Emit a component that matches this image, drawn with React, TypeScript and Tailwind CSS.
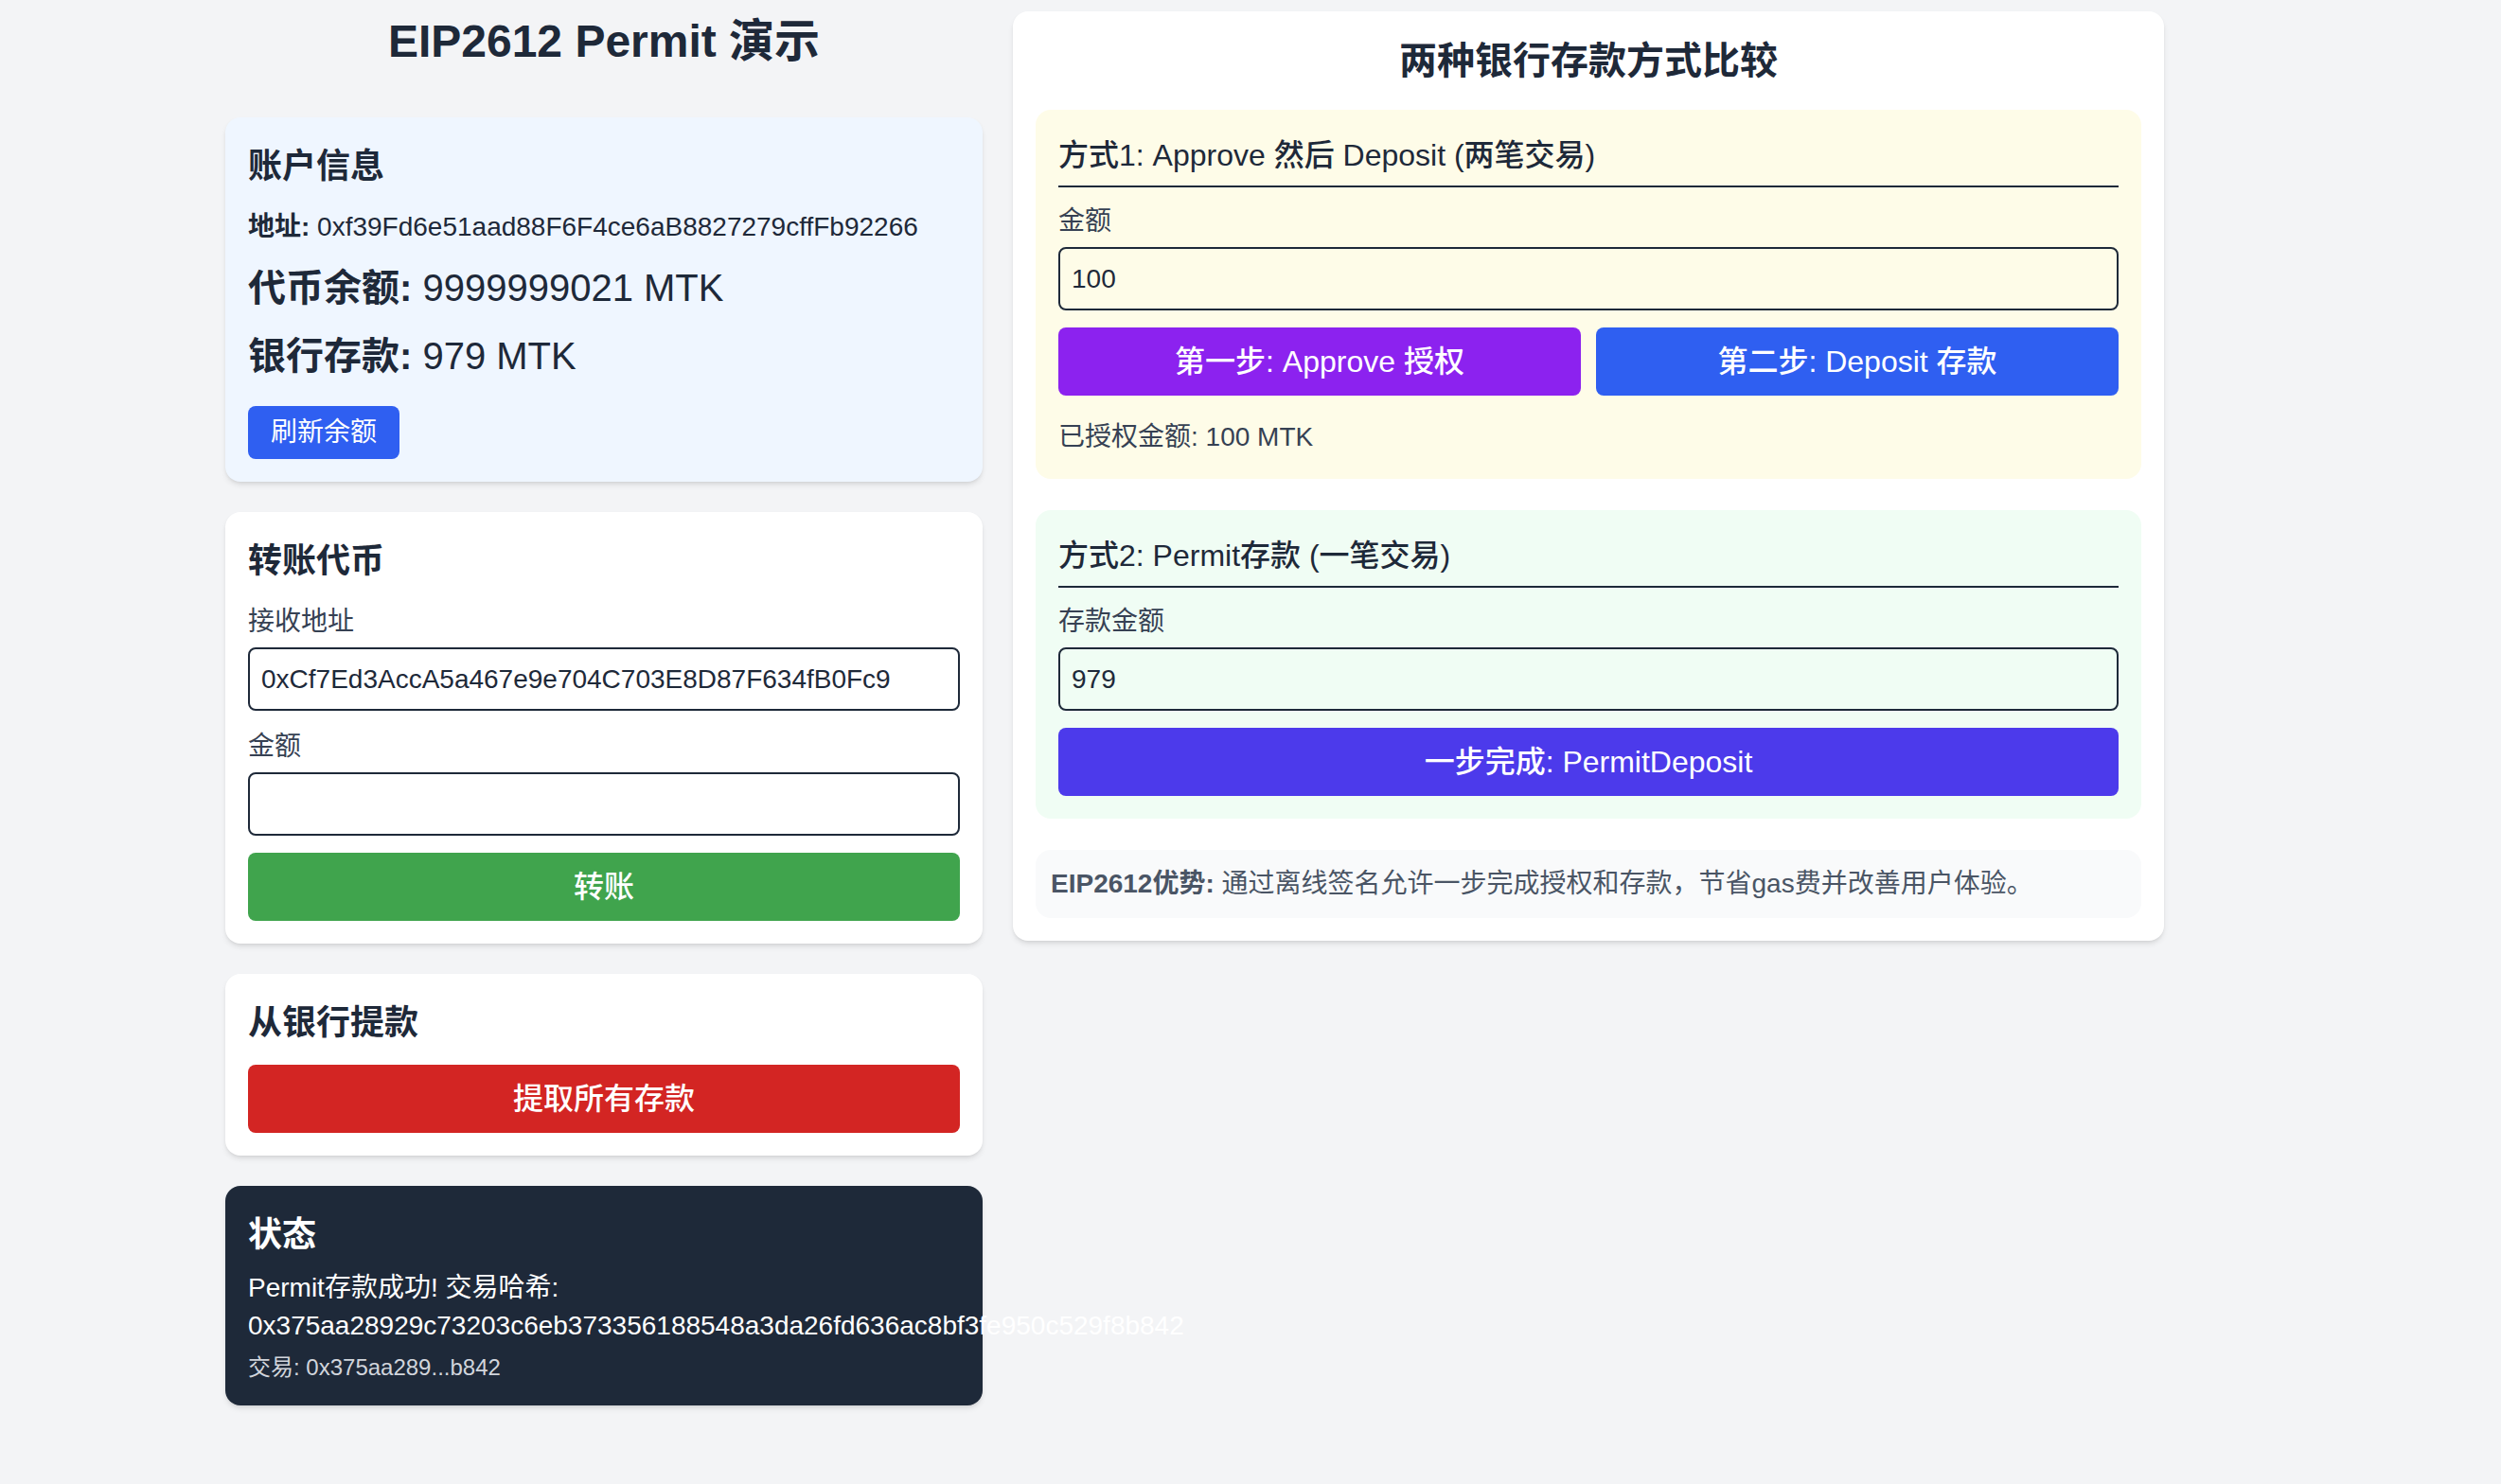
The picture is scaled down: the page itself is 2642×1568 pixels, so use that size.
import React from 'react';

const account = '0xf39Fd6e51aad88F6F4ce6aB8827279cffFb92266';
const recipient = '0xCf7Ed3AccA5a467e9e704C703E8D87F634fB0Fc9';
const txHash = '0x375aa28929c73203c6eb373356188548a3da26fd636ac8bf3fe950c529f8b842';

function Field({ label, value }: { label: string; value: string }) {
  return (
    <div className="mb-[18px]">
      <label className="block text-[28px] leading-[40px] text-gray-700 mb-[7px]">{label}</label>
      <input
        readOnly
        value={value}
        className="w-full h-[67px] px-3 text-[28px] leading-[40px] text-gray-800 bg-transparent border-2 border-gray-800 rounded-lg outline-none"
      />
    </div>
  );
}

function Card({ children, className = '' }: { children: React.ReactNode; className?: string }) {
  return <div className={`rounded-2xl p-6 shadow-md ${className}`}>{children}</div>;
}

export default function App() {
  return (
    <div className="min-h-screen bg-gray-100 text-gray-800 font-['Liberation_Sans','Noto_Sans_CJK_SC',sans-serif]">
      <div className="flex items-start gap-8 pl-[238px] pt-3">
        {/* Left column */}
        <div className="w-[800px] shrink-0">
          <h1 className="text-[48px] leading-[64px] font-bold text-center mb-12">EIP2612 Permit 演示</h1>

          <div className="flex flex-col gap-8">
            {/* Account */}
            <Card className="bg-blue-50">
              <h2 className="text-[36px] leading-[56px] font-bold mb-4">账户信息</h2>
              <p className="text-[28px] leading-[40px] mb-4">
                <span className="font-bold">地址:</span> {account}
              </p>
              <p className="text-[40px] leading-[56px] mb-4">
                <span className="font-bold">代币余额:</span> 9999999021 MTK
              </p>
              <p className="text-[40px] leading-[56px] mb-[25px]">
                <span className="font-bold">银行存款:</span> 979 MTK
              </p>
              <button className="bg-[#2f5ff1] text-white text-[28px] leading-[40px] px-6 py-2 rounded-lg">
                刷新余额
              </button>
            </Card>

            {/* Transfer */}
            <Card className="bg-white">
              <h2 className="text-[36px] leading-[56px] font-bold mb-4">转账代币</h2>
              <Field label="接收地址" value={recipient} />
              <Field label="金额" value="" />
              <button className="w-full bg-[#40a44d] text-white text-[32px] leading-[48px] font-medium py-3 rounded-lg">
                转账
              </button>
            </Card>

            {/* Withdraw */}
            <Card className="bg-white">
              <h2 className="text-[36px] leading-[56px] font-bold mb-4">从银行提款</h2>
              <button className="w-full bg-[#d32523] text-white text-[32px] leading-[48px] font-medium py-3 rounded-lg">
                提取所有存款
              </button>
            </Card>

            {/* Status */}
            <Card className="bg-gray-800 text-white">
              <h2 className="text-[36px] leading-[56px] font-bold mb-2">状态</h2>
              <p className="text-[28px] leading-[40px]">Permit存款成功! 交易哈希: {txHash}</p>
              <p className="text-[24px] leading-[32px] text-gray-300 mt-2">交易: 0x375aa289...b842</p>
            </Card>
          </div>
        </div>

        {/* Right column */}
        <div className="w-[1216px] shrink-0 bg-white rounded-2xl p-6 shadow-md">
          <h2 className="text-[40px] leading-[56px] font-bold text-center mb-6">两种银行存款方式比较</h2>

          <div className="flex flex-col gap-[33px]">
            {/* Method 1 */}
            <div className="bg-yellow-50 rounded-2xl p-6">
              <h3 className="text-[32px] leading-[48px] font-medium pb-2 border-b-2 border-gray-800 mb-4">
                方式1: Approve 然后 Deposit (两笔交易)
              </h3>
              <Field label="金额" value="100" />
              <div className="grid grid-cols-2 gap-4">
                <button className="bg-[#8c22ef] text-white text-[32px] leading-[48px] font-medium py-3 rounded-lg">
                  第一步: Approve 授权
                </button>
                <button className="bg-[#2f5ff1] text-white text-[32px] leading-[48px] font-medium py-3 rounded-lg">
                  第二步: Deposit 存款
                </button>
              </div>
              <p className="text-[28px] leading-[40px] text-gray-700 mt-6">已授权金额: 100 MTK</p>
            </div>

            {/* Method 2 */}
            <div className="bg-green-50 rounded-2xl p-6">
              <h3 className="text-[32px] leading-[48px] font-medium pb-2 border-b-2 border-gray-800 mb-4">
                方式2: Permit存款 (一笔交易)
              </h3>
              <Field label="存款金额" value="979" />
              <button className="w-full bg-[#4c3aeb] text-white text-[32px] leading-[48px] font-medium py-3 rounded-lg">
                一步完成: PermitDeposit
              </button>
            </div>

            {/* Note */}
            <div className="bg-gray-50 rounded-2xl p-4">
              <p className="text-[28px] leading-[40px] text-gray-600">
                <span className="font-bold">EIP2612优势:</span> 通过离线签名允许一步完成授权和存款，节省gas费并改善用户体验。
              </p>
            </div>
          </div>
        </div>
      </div>
    </div>
  );
}
